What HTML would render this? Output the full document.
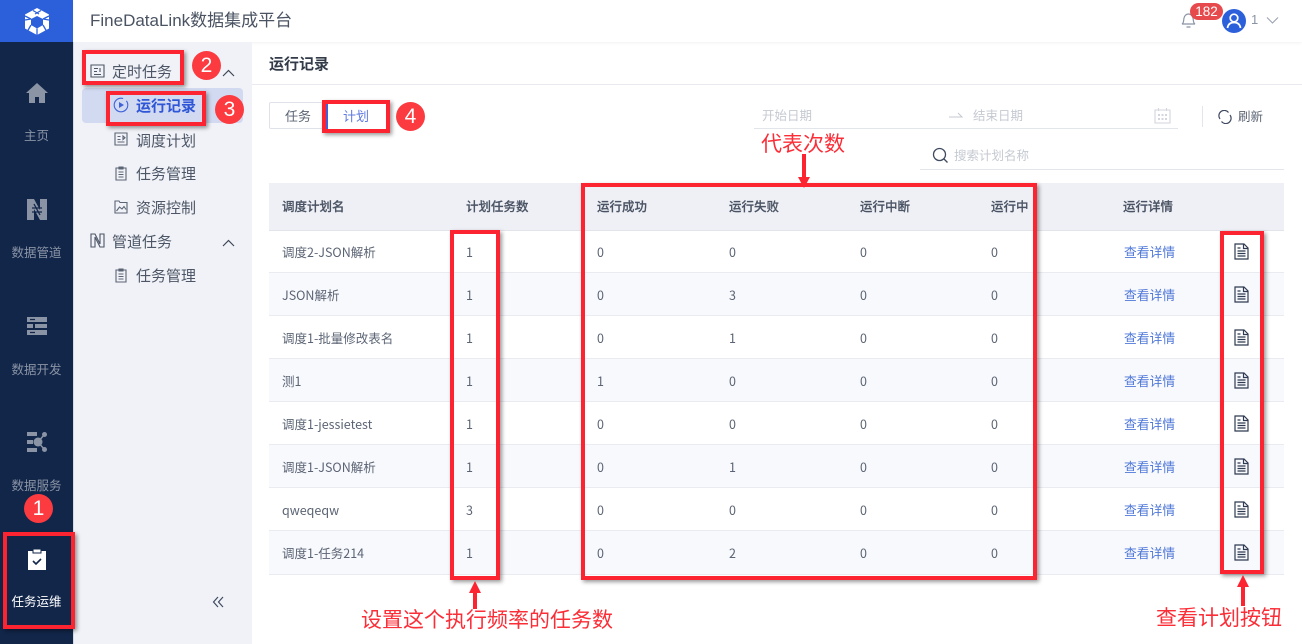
<!DOCTYPE html>
<html lang="zh"><head><meta charset="utf-8"><title>FineDataLink</title>
<style>
html,body{margin:0;padding:0;background:#fff}
#p{position:relative;width:1302px;height:644px;overflow:hidden;background:#fff;font-family:"Liberation Sans","Noto Sans CJK SC",sans-serif;color:#4f5868;font-size:13px}
#p div,#p svg{position:absolute}
.t{white-space:nowrap;line-height:18px;height:18px}
.nav{left:0;width:73px;text-align:center;font-size:12.500px;color:#8b94a5}
.m{font-size:15px;color:#4d5666}
.h{top:198px;font-size:12.500px;font-weight:500;color:#4a5364;-webkit-text-stroke:.2px #4a5364}
.c{font-size:12.500px;color:#5b6474;font-family:"Noto Sans CJK SC","Liberation Sans",sans-serif}
.l{font-size:12.800px;color:#4f78d8;margin-top:1px}
.rb{border:4px solid #fb2430;box-shadow:2px 2px 4px rgba(0,0,0,.4);box-sizing:border-box}
.n{width:29px;height:29px;border-radius:50%;background:#fb3b40;color:#fff;font-size:21px;line-height:29px;text-align:center}
.a{color:#fb2d37;font-size:21px;line-height:26px;white-space:nowrap}
.row{left:269px;width:1015px;height:42px;border-bottom:1px solid #e9ebf1}
</style></head><body><div id="p">
<!-- left nav -->
<div style="left:0;top:0;width:73px;height:644px;background:#12264a"></div>
<div style="left:73px;top:42px;width:1px;height:602px;background:#d5dae4"></div>
<div style="left:0;top:0;width:73px;height:42px;background:#2c60db"></div>
<svg style="left:24px;top:8px" width="26" height="27" viewBox="0 0 26 27"><path d="M13 0L25 6.500V20.500L13 27L1 20.500V6.500Z" fill="#fff"/><path d="M13 8L19 11V17L13 20.500L7 17V11Z" fill="#2c60db"/><path d="M9 2.500L15 6M17 2.500L11 6M1 12L7 11M25 12L19 11M7 17L3 24M19 17L23 24M13 20.500V27M1 8l6 3M25 8l-6 3" stroke="#2c60db" stroke-width="1.300" fill="none"/></svg>
<svg style="left:25px;top:82px" width="24" height="22" viewBox="0 0 24 22"><path d="M12 1L1 11h3v10h6v-6h4v6h6V11h3z" fill="#8b94a5"/></svg>
<div class="t nav" style="top:127px">主页</div>
<svg style="left:26px;top:198px" width="22" height="23" viewBox="0 0 22 23"><path d="M1 1h7l6 11V1h7v21h-7L8 11v11H1z" fill="#8b94a5"/><path d="M8 6l6 11M6 10h10M6 14h10" stroke="#12264a" stroke-width="1.300"/></svg>
<div class="t nav" style="top:244px">数据管道</div>
<svg style="left:26px;top:316px" width="22" height="20" viewBox="0 0 22 20"><path d="M1 1h20v5H1zM1 8h6v4H1zM9 8h12v4H9zM1 14h20v5H1z" fill="#8b94a5"/><path d="M4 3.500h5M4 16.500h5" stroke="#12264a" stroke-width="1.200"/></svg>
<div class="t nav" style="top:361px">数据开发</div>
<svg style="left:26px;top:431px" width="22" height="22" viewBox="0 0 22 22"><path d="M1 1h10v4H1zM1 9h6v4H1zM1 17h10v4H1z" fill="#8b94a5"/><circle cx="12" cy="11" r="4.500" fill="#8b94a5"/><circle cx="18.500" cy="3.500" r="2.500" fill="#8b94a5"/><circle cx="18.500" cy="18.500" r="2.500" fill="#8b94a5"/><path d="M12 11L18 4M12 11l6 7" stroke="#8b94a5" stroke-width="1.500"/></svg>
<div class="t nav" style="top:477px">数据服务</div>
<svg style="left:27px;top:548px" width="20" height="23" viewBox="0 0 20 23"><path d="M1 3h18v19H1z" fill="#fff"/><path d="M6 1h8v4H6z" fill="#fff" stroke="#12264a"/><path d="M6 13l3 3 5-5" stroke="#12264a" stroke-width="1.600" fill="none"/></svg>
<div class="t nav" style="top:593px;color:#fff">任务运维</div>
<!-- top bar -->
<div style="left:74px;top:0;width:1228px;height:42px;background:#fff;box-shadow:0 1px 3px rgba(0,0,0,.06)"></div>
<div class="t" style="left:90px;top:10px;height:22px;line-height:22px;font-size:17px;color:#4a5362">FineDataLink数据集成平台</div>
<svg style="left:1180px;top:12px" width="17" height="16" viewBox="0 0 17 16"><path d="M2 12c2-1 1.500-4 2-6 .5-2.500 2.500-4 4.500-4s4 1.500 4.500 4c.5 2 0 5 2 6zM6.500 15h4" fill="none" stroke="#8b94a5" stroke-width="1.200"/></svg>
<div style="left:1190px;top:3px;width:33px;height:17px;border-radius:9px;background:#e64a4d;color:#fff;font-size:13.500px;line-height:17px;text-align:center">182</div>
<svg style="left:1222px;top:9px" width="24" height="24" viewBox="0 0 24 24"><circle cx="12" cy="12" r="12" fill="#2c60db"/><circle cx="12" cy="9" r="3.800" fill="none" stroke="#fff" stroke-width="1.700"/><path d="M5.500 19c.5-4 3-5.500 6.500-5.500s6 1.500 6.500 5.500" fill="none" stroke="#fff" stroke-width="1.700"/></svg>
<div class="t" style="left:1251px;top:11px;font-size:13px;color:#8b94a5">1</div>
<svg style="left:1266px;top:16px" width="13" height="9" viewBox="0 0 13 9"><path d="M1 1.500l5.500 5.500L12 1.500" fill="none" stroke="#9aa2b0" stroke-width="1.100"/></svg>
<!-- second sidebar -->
<div style="left:74px;top:42px;width:178px;height:602px;background:#f0f2f7"></div>
<div style="left:82px;top:88px;width:161px;height:35px;border-radius:4px;background:#d2daf1"></div>
<svg style="left:90px;top:64px" width="15" height="14" viewBox="0 0 15 14"><path d="M1 1h13v12H1zM4 4.500h4M4 7.500h3M4 10.500h7M10 4v4" fill="none" stroke="#4d5666" stroke-width="1.100"/></svg>
<div class="t m" style="left:112px;top:64px">定时任务</div>
<svg style="left:222px;top:69px" width="13" height="8" viewBox="0 0 13 8"><path d="M1 7l5.500-5.500L12 7" fill="none" stroke="#3f4757" stroke-width="1.200"/></svg>
<svg style="left:113px;top:97px" width="16" height="16" viewBox="0 0 16 16"><circle cx="8" cy="8" r="6.800" fill="none" stroke="#3f62d8" stroke-width="1.100" stroke-dasharray="34 4"/><path d="M6 5l5 3-5 3z" fill="#3f62d8"/></svg>
<div class="t m" style="left:136px;top:98px;color:#2f56d6;font-weight:700">运行记录</div>
<svg style="left:114px;top:132px" width="14" height="14" viewBox="0 0 14 14"><path d="M1 1h12v12H1zM3.500 4.500h3M3.500 7.500h3M3.500 10h7M9 4v3.500l2-1.700z" fill="none" stroke="#5b6474" stroke-width="1.100"/></svg>
<div class="t m" style="left:136px;top:133px">调度计划</div>
<svg style="left:115px;top:166px" width="12" height="15" viewBox="0 0 12 15"><path d="M1 2h10v12H1zM4 1h4v2H4zM3.500 6h5M3.500 8.500h5M3.500 11h5" fill="none" stroke="#5b6474" stroke-width="1.100"/></svg>
<div class="t m" style="left:136px;top:166px">任务管理</div>
<svg style="left:114px;top:200px" width="14" height="14" viewBox="0 0 14 14"><path d="M1 1h4l1 1.500h7V13H1zM2.500 11l3-4 2.500 2 2-2.500 2 3" fill="none" stroke="#5b6474" stroke-width="1.100"/></svg>
<div class="t m" style="left:136px;top:200px">资源控制</div>
<svg style="left:90px;top:233px" width="15" height="15" viewBox="0 0 15 15"><path d="M1 1h4l5 10V1h4v13h-4L5 4v10H1z" fill="none" stroke="#4d5666" stroke-width="1.100"/></svg>
<div class="t m" style="left:112px;top:234px">管道任务</div>
<svg style="left:222px;top:239px" width="13" height="8" viewBox="0 0 13 8"><path d="M1 7l5.500-5.500L12 7" fill="none" stroke="#3f4757" stroke-width="1.200"/></svg>
<svg style="left:115px;top:268px" width="12" height="15" viewBox="0 0 12 15"><path d="M1 2h10v12H1zM4 1h4v2H4zM3.500 6h5M3.500 8.500h5M3.500 11h5" fill="none" stroke="#5b6474" stroke-width="1.100"/></svg>
<div class="t m" style="left:136px;top:268px">任务管理</div>
<svg style="left:212px;top:596px" width="12" height="12" viewBox="0 0 12 12"><path d="M6 1L1.500 6 6 11M11 1L6.500 6 11 11" fill="none" stroke="#3f4a60" stroke-width="1.200"/></svg>
<!-- content head -->
<div class="t" style="left:269px;top:56px;font-size:15px;font-weight:700;color:#333b49">运行记录</div>
<div style="left:252px;top:84px;width:1050px;height:1px;background:#e9ebf1"></div>
<div style="left:269px;top:102px;width:54px;height:27px;border:1px solid #dfe2e9;border-radius:2px 0 0 2px;box-sizing:border-box"></div>
<div class="t" style="left:285px;top:108px;font-size:13px;color:#5b6474">任务</div>
<div style="left:326px;top:104px;width:60px;height:26px;background:#fff;border-left:2px solid #3f62d8;box-sizing:border-box"></div>
<div class="t" style="left:343px;top:108px;font-size:13px;color:#5f7ae0">计划</div>
<div class="t" style="left:762px;top:107px;font-size:12.500px;color:#c5c9d1">开始日期</div>
<svg style="left:949px;top:112px" width="14" height="6" viewBox="0 0 14 6"><path d="M0 5h13L9 1" fill="none" stroke="#c5c9d1" stroke-width="1"/></svg>
<div class="t" style="left:973px;top:107px;font-size:12.500px;color:#c5c9d1">结束日期</div>
<svg style="left:1154px;top:107px" width="17" height="17" viewBox="0 0 17 17"><path d="M1 3h15v13H1zM4.500 1v3M12.500 1v3" fill="none" stroke="#d3d6dc" stroke-width="1.100"/><path d="M4 7h2v2H4zM7.500 7h2v2h-2zM11 7h2v2h-2zM4 11h2v2H4zM7.500 11h2v2h-2zM11 11h2v2h-2z" fill="#d3d6dc"/></svg>
<div style="left:754px;top:128px;width:424px;height:1px;background:#e2e5ea"></div>
<div style="left:1202px;top:106px;width:1px;height:21px;background:#e2e5ea"></div>
<svg style="left:1218px;top:110px" width="14" height="14" viewBox="0 0 14 14"><path d="M2 9A5.300 5.300 0 0 1 10.500 2.500M12 5A5.300 5.300 0 0 1 3.500 11.500" fill="none" stroke="#3f4a60" stroke-width="1.200"/></svg>
<div class="t" style="left:1238px;top:108px;font-size:12.500px;color:#5b6474">刷新</div>
<svg style="left:932px;top:147px" width="17" height="17" viewBox="0 0 17 17"><circle cx="7.500" cy="7.500" r="6" fill="none" stroke="#3f4a60" stroke-width="1.300"/><path d="M12 12l3.500 3.500" stroke="#3f4a60" stroke-width="1.300"/></svg>
<div class="t" style="left:954px;top:147px;font-size:12.500px;color:#c5c9d1">搜索计划名称</div>
<div style="left:920px;top:169px;width:364px;height:1px;background:#e2e5ea"></div>
<!-- table -->
<div style="left:269px;top:183px;width:1015px;height:48px;background:#eef0f5;border-bottom:1px solid #e1e4ea;box-sizing:border-box"></div>
<div class="t h" style="left:282px">调度计划名</div>
<div class="t h" style="left:466px">计划任务数</div>
<div class="t h" style="left:597px">运行成功</div>
<div class="t h" style="left:729px">运行失败</div>
<div class="t h" style="left:860px">运行中断</div>
<div class="t h" style="left:991px">运行中</div>
<div class="t h" style="left:1123px">运行详情</div>
<div class="row" style="top:231px;height:41px"></div>
<div class="row" style="top:273px;background:#f8f9fd"></div>
<div class="row" style="top:316px"></div>
<div class="row" style="top:359px;background:#f8f9fd"></div>
<div class="row" style="top:402px"></div>
<div class="row" style="top:445px;background:#f8f9fd"></div>
<div class="row" style="top:488px"></div>
<div class="row" style="top:531px;height:43px;background:#f8f9fd"></div>

<div class="t c" style="left:282px;top:243px">调度2-JSON解析</div><div class="t c" style="left:466px;top:243px">1</div><div class="t c" style="left:597px;top:243px">0</div><div class="t c" style="left:729px;top:243px">0</div><div class="t c" style="left:860px;top:243px">0</div><div class="t c" style="left:991px;top:243px">0</div><div class="t l" style="left:1124px;top:243px">查看详情</div>
<div class="t c" style="left:282px;top:286px">JSON解析</div><div class="t c" style="left:466px;top:286px">1</div><div class="t c" style="left:597px;top:286px">0</div><div class="t c" style="left:729px;top:286px">3</div><div class="t c" style="left:860px;top:286px">0</div><div class="t c" style="left:991px;top:286px">0</div><div class="t l" style="left:1124px;top:286px">查看详情</div>
<div class="t c" style="left:282px;top:329px">调度1-批量修改表名</div><div class="t c" style="left:466px;top:329px">1</div><div class="t c" style="left:597px;top:329px">0</div><div class="t c" style="left:729px;top:329px">1</div><div class="t c" style="left:860px;top:329px">0</div><div class="t c" style="left:991px;top:329px">0</div><div class="t l" style="left:1124px;top:329px">查看详情</div>
<div class="t c" style="left:282px;top:372px">测1</div><div class="t c" style="left:466px;top:372px">1</div><div class="t c" style="left:597px;top:372px">1</div><div class="t c" style="left:729px;top:372px">0</div><div class="t c" style="left:860px;top:372px">0</div><div class="t c" style="left:991px;top:372px">0</div><div class="t l" style="left:1124px;top:372px">查看详情</div>
<div class="t c" style="left:282px;top:415px">调度1-jessietest</div><div class="t c" style="left:466px;top:415px">1</div><div class="t c" style="left:597px;top:415px">0</div><div class="t c" style="left:729px;top:415px">0</div><div class="t c" style="left:860px;top:415px">0</div><div class="t c" style="left:991px;top:415px">0</div><div class="t l" style="left:1124px;top:415px">查看详情</div>
<div class="t c" style="left:282px;top:458px">调度1-JSON解析</div><div class="t c" style="left:466px;top:458px">1</div><div class="t c" style="left:597px;top:458px">0</div><div class="t c" style="left:729px;top:458px">1</div><div class="t c" style="left:860px;top:458px">0</div><div class="t c" style="left:991px;top:458px">0</div><div class="t l" style="left:1124px;top:458px">查看详情</div>
<div class="t c" style="left:282px;top:501px">qweqeqw</div><div class="t c" style="left:466px;top:501px">3</div><div class="t c" style="left:597px;top:501px">0</div><div class="t c" style="left:729px;top:501px">0</div><div class="t c" style="left:860px;top:501px">0</div><div class="t c" style="left:991px;top:501px">0</div><div class="t l" style="left:1124px;top:501px">查看详情</div>
<div class="t c" style="left:282px;top:544px">调度1-任务214</div><div class="t c" style="left:466px;top:544px">1</div><div class="t c" style="left:597px;top:544px">0</div><div class="t c" style="left:729px;top:544px">2</div><div class="t c" style="left:860px;top:544px">0</div><div class="t c" style="left:991px;top:544px">0</div><div class="t l" style="left:1124px;top:544px">查看详情</div>

<svg style="left:1234px;top:243px" width="15" height="17" viewBox="0 0 15 17"><path d="M1 1h9l4 4v11H1zM9.500 1v4.500H14M3.500 8h8M3.500 10.500h8M3.500 13h8M3.500 5h3" fill="none" stroke="#2f3b52" stroke-width="1.200"/></svg>
<svg style="left:1234px;top:286px" width="15" height="17" viewBox="0 0 15 17"><path d="M1 1h9l4 4v11H1zM9.500 1v4.500H14M3.500 8h8M3.500 10.500h8M3.500 13h8M3.500 5h3" fill="none" stroke="#2f3b52" stroke-width="1.200"/></svg>
<svg style="left:1234px;top:329px" width="15" height="17" viewBox="0 0 15 17"><path d="M1 1h9l4 4v11H1zM9.500 1v4.500H14M3.500 8h8M3.500 10.500h8M3.500 13h8M3.500 5h3" fill="none" stroke="#2f3b52" stroke-width="1.200"/></svg>
<svg style="left:1234px;top:372px" width="15" height="17" viewBox="0 0 15 17"><path d="M1 1h9l4 4v11H1zM9.500 1v4.500H14M3.500 8h8M3.500 10.500h8M3.500 13h8M3.500 5h3" fill="none" stroke="#2f3b52" stroke-width="1.200"/></svg>
<svg style="left:1234px;top:415px" width="15" height="17" viewBox="0 0 15 17"><path d="M1 1h9l4 4v11H1zM9.500 1v4.500H14M3.500 8h8M3.500 10.500h8M3.500 13h8M3.500 5h3" fill="none" stroke="#2f3b52" stroke-width="1.200"/></svg>
<svg style="left:1234px;top:458px" width="15" height="17" viewBox="0 0 15 17"><path d="M1 1h9l4 4v11H1zM9.500 1v4.500H14M3.500 8h8M3.500 10.500h8M3.500 13h8M3.500 5h3" fill="none" stroke="#2f3b52" stroke-width="1.200"/></svg>
<svg style="left:1234px;top:501px" width="15" height="17" viewBox="0 0 15 17"><path d="M1 1h9l4 4v11H1zM9.500 1v4.500H14M3.500 8h8M3.500 10.500h8M3.500 13h8M3.500 5h3" fill="none" stroke="#2f3b52" stroke-width="1.200"/></svg>
<svg style="left:1234px;top:544px" width="15" height="17" viewBox="0 0 15 17"><path d="M1 1h9l4 4v11H1zM9.500 1v4.500H14M3.500 8h8M3.500 10.500h8M3.500 13h8M3.500 5h3" fill="none" stroke="#2f3b52" stroke-width="1.200"/></svg>

<!-- annotations -->
<div class="rb" style="left:3px;top:532px;width:72px;height:97px"></div>
<div class="n" style="left:24px;top:494px">1</div>
<div class="rb" style="left:82px;top:50px;width:102px;height:35px"></div>
<div class="n" style="left:192px;top:51px">2</div>
<div class="rb" style="left:106px;top:91px;width:100px;height:35px"></div>
<div class="n" style="left:215px;top:95px">3</div>
<div class="rb" style="left:322px;top:100px;width:68px;height:33px"></div>
<div class="n" style="left:396px;top:102px">4</div>
<div class="rb" style="left:450px;top:230px;width:50px;height:350px"></div>
<div class="rb" style="left:581px;top:183px;width:456px;height:397px"></div>
<div class="rb" style="left:1220px;top:231px;width:44px;height:343px"></div>
<svg style="left:796px;top:154px" width="16" height="34" viewBox="0 0 16 34"><path d="M6 0h4v24h-4zM2 23h12l-6 11z" fill="#fb2430"/></svg>
<svg style="left:467px;top:581px" width="16" height="28" viewBox="0 0 16 28"><path d="M6 28h4V11h-4zM2 12h12L8 0z" fill="#fb2430"/></svg>
<svg style="left:1235px;top:575px" width="16" height="32" viewBox="0 0 16 32"><path d="M6 31h4V11h-4zM2 12h12L8 0z" fill="#fb2430"/></svg>
<div class="a" style="left:761px;top:132px">代表次数</div>
<div class="a" style="left:361px;top:608px">设置这个执行频率的任务数</div>
<div class="a" style="left:1156px;top:606px">查看计划按钮</div>
</div></body></html>
